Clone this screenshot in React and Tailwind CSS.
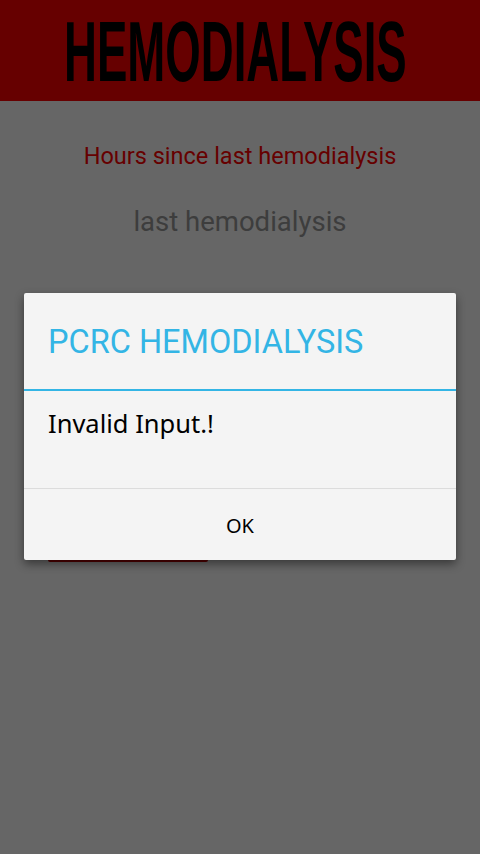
import React from 'react';

const roboto = { fontFamily: 'Roboto, "Noto Sans", sans-serif' };

const AlertDialog = ({ title, message, onOk }) => (
  <div className="absolute inset-0 bg-black/60">
    <div className="absolute left-6 right-6 top-[293px] rounded-[2px] bg-[#f4f4f4] shadow-[0_4px_10px_rgba(0,0,0,0.45)]">
      <div className="flex h-24 items-center px-6 pt-[2px]">
        <h2 className="text-[32.5px] leading-none text-[#33b5e5] font-['Roboto',sans-serif]">{title}</h2>
      </div>
      <div className="h-[2px] bg-[#33b5e5]" />
      <div className="h-[97px] px-6 pt-[16px]">
        <p className="text-[25.5px] leading-[32px] text-black font-['Noto_Sans',sans-serif]">{message}</p>
      </div>
      <div className="h-px bg-[#dcdcdc]" />
      <button
        onClick={onOk}
        className="flex h-[71px] w-full items-center justify-center pt-[2px] text-[20px] text-black font-['Noto_Sans',sans-serif]"
      >
        OK
      </button>
    </div>
  </div>
);

export default function App() {
  return (
    <div className="relative h-[854px] w-[480px] overflow-hidden bg-white">
      {/* Header */}
      <div className="flex h-[101px] items-center justify-center overflow-hidden bg-[#ff0000] pr-[10px]">
        <h1 className="scale-x-[0.53] whitespace-nowrap text-[86px] font-bold leading-none text-black font-['Liberation_Sans',Arial,sans-serif]">
          HEMODIALYSIS
        </h1>
      </div>

      <div className="flex flex-col items-center pt-[40px]" style={roboto}>
        <p className="text-[23.5px] leading-[30px] text-[#ff0000]">Hours since last hemodialysis</p>
        <p className="mt-[36px] text-[27.5px] leading-[30px] text-[#999999]">last hemodialysis</p>
        <div className="mt-[105px] h-[150px]" />
        <div className="self-start ml-12 h-[70px] w-40 rounded-[2px] bg-[#cc0000]" />
      </div>

      <AlertDialog title="PCRC HEMODIALYSIS" message="Invalid Input.!" />
    </div>
  );
}
